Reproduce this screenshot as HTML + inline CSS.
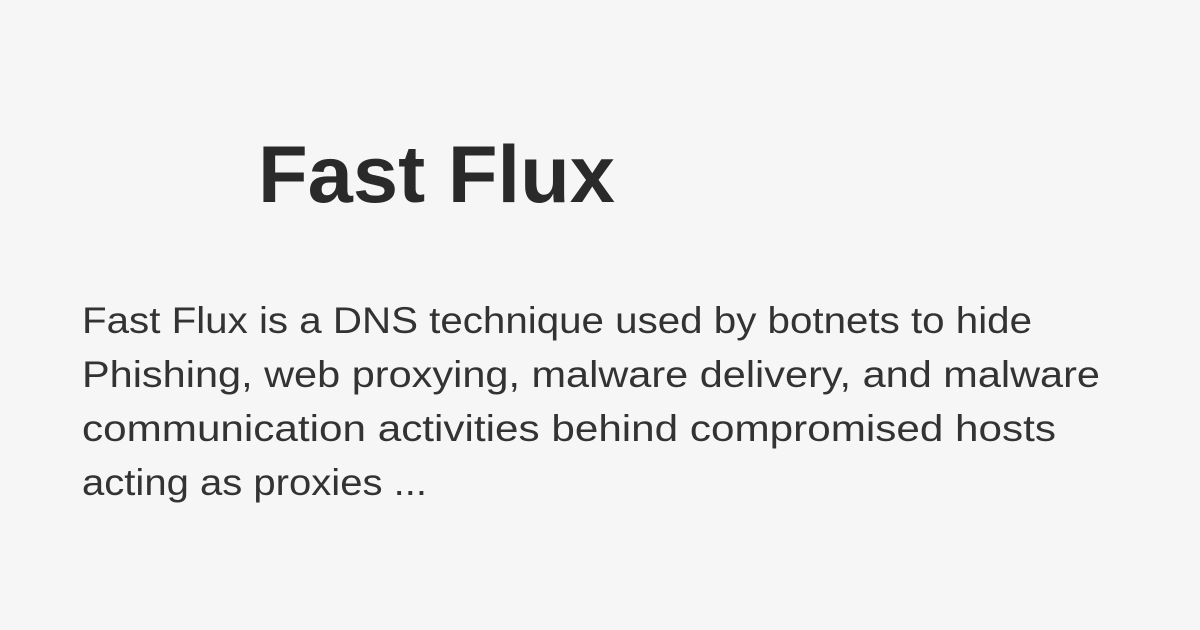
<!DOCTYPE html>
<html><head><meta charset="utf-8"><style>
html,body{margin:0;padding:0;background:#f7f6f7;}
svg{display:block}
</style></head><body>
<svg width="1200" height="630" viewBox="0 0 1200 630" xmlns="http://www.w3.org/2000/svg">
<rect width="1200" height="630" fill="#f7f6f7"/>
<text x="258" y="202" font-family="Liberation Sans, Arial, sans-serif" font-weight="bold" font-size="81" fill="#2a2a2a" textLength="357" lengthAdjust="spacingAndGlyphs">Fast Flux</text>
<g font-family="Liberation Sans, Arial, sans-serif" font-size="37" fill="#333333">
<text x="82" y="333" textLength="950" lengthAdjust="spacingAndGlyphs">Fast Flux is a DNS technique used by botnets to hide</text>
<text x="82" y="387" textLength="1018" lengthAdjust="spacingAndGlyphs">Phishing, web proxying, malware delivery, and malware</text>
<text x="82" y="441" textLength="974" lengthAdjust="spacingAndGlyphs">communication activities behind compromised hosts</text>
<text x="82" y="495" textLength="345" lengthAdjust="spacingAndGlyphs">acting as proxies ...</text>
</g>
</svg>
</body></html>
